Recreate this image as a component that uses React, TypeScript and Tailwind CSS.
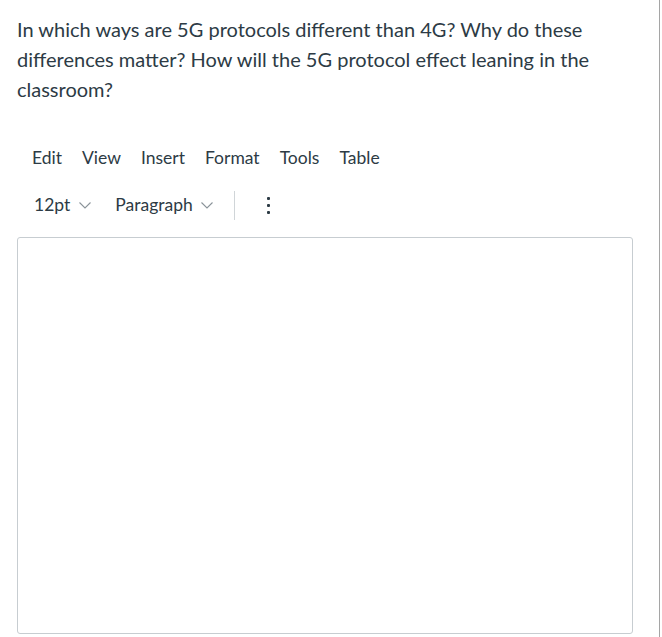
const menus = ["Edit", "View", "Insert", "Format", "Tools", "Table"];

function Caret(): JSX.Element {
  return (
    <svg width="12" height="7" viewBox="0 0 12 7" className="text-[#8a9399]">
      <polyline points="0.5,0.5 6,6 11.5,0.5" fill="none" stroke="currentColor" strokeWidth="1.1" />
    </svg>
  );
}

export default function App(): JSX.Element {
  return (
    <div className="w-[662px] h-[637px] bg-white overflow-hidden">
      <div
        className="w-[660px] h-full border-r border-[#a5a5a5] text-[#2d3b45]"
        style={{ fontFamily: "Lato, 'Noto Sans', sans-serif" }}
      >
        <p className="pl-[17px] pr-[40px] pt-[14px] text-[20px] leading-[30px]">
          In which ways are 5G protocols different than 4G? Why do these
          differences matter? How will the 5G protocol effect leaning in the
          classroom?
        </p>

        {/* menubar */}
        <div className="flex items-center pl-[22px] mt-[39px] h-[30px] text-[17.5px]">
          {menus.map((m) => (
            <span key={m} className="px-[10px]">
              {m}
            </span>
          ))}
        </div>

        {/* toolbar */}
        <div className="flex items-center pl-[34px] mt-[17px] h-[30px] text-[17.5px]">
          <span>12pt</span>
          <span className="ml-[9px] flex">
            <Caret />
          </span>
          <span className="ml-[24px]">Paragraph</span>
          <span className="ml-[8px] flex">
            <Caret />
          </span>
          <span className="ml-[21px] w-px h-[29px] bg-[#d0d5d8]" />
          <span className="ml-[32px] flex flex-col gap-[4px]">
            <span className="w-[3px] h-[3px] bg-[#2d3b45] rounded-[1px]" />
            <span className="w-[3px] h-[3px] bg-[#2d3b45] rounded-[1px]" />
            <span className="w-[3px] h-[3px] bg-[#2d3b45] rounded-[1px]" />
          </span>
        </div>

        {/* editor area */}
        <div className="ml-[17px] mt-[17px] w-[616px] h-[397px] border border-[#c7cdd1] rounded-[3px]" />
      </div>
    </div>
  );
}
